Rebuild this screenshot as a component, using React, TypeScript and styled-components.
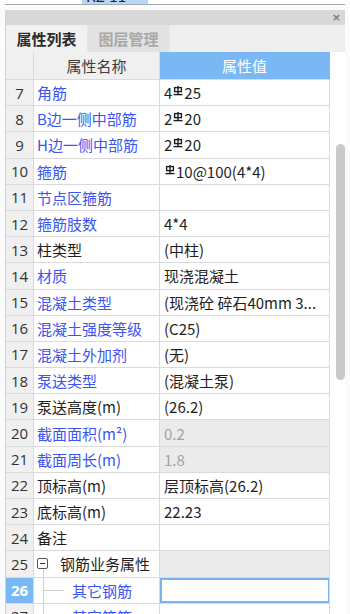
import React from "react";
import styled, { createGlobalStyle } from "styled-components";

const GlobalStyle = createGlobalStyle`
  html, body { margin: 0; padding: 0; }
  body {
    background: #fbfbfb;
    overflow: hidden;
    font-family: "Noto Sans CJK SC", "Noto Sans", sans-serif;
    -webkit-font-smoothing: antialiased;
  }
`;

const Page = styled.div`
  width: 350px;
  height: 614px;
  padding: 0 5px;
  box-sizing: border-box;
  overflow: hidden;
`;

const TopInput = styled.div`
  height: 4px;
  background: #fff;
  border-bottom: 1px solid #a8a8a8;
  display: flex;
  align-items: flex-end;
  overflow: hidden;
`;

const Highlight = styled.div`
  margin-left: 77px;
  width: 66px;
  height: 4px;
  flex: none;
  background: #b8d6f5;
  position: relative;
  overflow: hidden;
`;

const HighlightText = styled.span`
  position: absolute;
  left: 4px;
  bottom: -1px;
  font-size: 15px;
  line-height: 18px;
  color: #222;
`;

const Gap = styled.div`
  height: 5px;
`;

const Panel = styled.div`
  display: flex;
  flex-direction: column;
  border-left: 1px solid #d2d2d2;
  background: #fff;
`;

const TitleBar = styled.div`
  height: 15px;
  background: #d8d8d8;
  display: flex;
  align-items: center;
  justify-content: flex-end;
  padding-right: 4px;
`;

const CloseIcon = styled.span`
  font-family: "DejaVu Sans", sans-serif;
  font-size: 11px;
  line-height: 11px;
  font-weight: bold;
  color: #7d7d7d;
`;

const TabBar = styled.div`
  height: 27px;
  background: #efefef;
  display: flex;
`;

const Tab = styled.div<{ $active?: boolean }>`
  width: 81px;
  display: flex;
  align-items: center;
  justify-content: center;
  font-size: 15px;
  font-weight: bold;
  color: ${(p) => (p.$active ? "#2b2b2b" : "#a8a8a8")};
  background: ${(p) => (p.$active ? "#f1f1f1" : "#e2e2e2")};
  border-right: 1px solid #e6e6e6;
`;

const Body = styled.div`
  display: flex;
`;

const Table = styled.div`
  width: 324px;
  display: grid;
  grid-template-columns: 28px 126px 170px;
  grid-auto-rows: 26.2px;
  grid-template-rows: 28px;
`;

const Cell = styled.div`
  box-sizing: border-box;
  border-right: 1px solid #dadada;
  border-bottom: 1px solid #dadada;
  display: flex;
  align-items: center;
  font-size: 15px;
  white-space: nowrap;
  overflow: hidden;
  position: relative;
`;

const HeadCell = styled(Cell)<{ $blue?: boolean }>`
  justify-content: center;
  background: ${(p) => (p.$blue ? "#7ab8f5" : "#f0f0f0")};
  color: ${(p) => (p.$blue ? "#ffffff" : "#3c3c3c")};
  border-right-color: ${(p) => (p.$blue ? "#7ab8f5" : "#dadada")};
`;

const NumCell = styled(Cell)<{ $selected?: boolean }>`
  justify-content: center;
  background: ${(p) => (p.$selected ? "#7ab8f5" : "#f0f0f0")};
  color: ${(p) => (p.$selected ? "#ffffff" : "#333")};
  font-weight: ${(p) => (p.$selected ? "bold" : "normal")};
  font-family: "Open Sans", "Noto Sans", sans-serif;
  font-size: 15px;
`;

const NameCell = styled(Cell)<{ $blue?: boolean; $indent?: number }>`
  padding-left: ${(p) => p.$indent ?? 3}px;
  color: ${(p) => (p.$blue ? "#3a55f0" : "#1e1e1e")};
  background: #fff;
`;

const ValueCell = styled(Cell)<{ $gray?: boolean; $dim?: boolean }>`
  padding-left: 4px;
  background: ${(p) => (p.$gray ? "#ebebeb" : "#fff")};
  color: ${(p) => (p.$dim ? "#a3a3a3" : "#1e1e1e")};
`;

const EditBox = styled.div`
  position: absolute;
  left: 0;
  top: 0;
  right: -1px;
  bottom: 0;
  border: 2px solid #7ab2ea;
  background: #fff;
`;

const ScrollTrack = styled.div`
  width: 16px;
  background: #fff;
  position: relative;
`;

const ScrollThumb = styled.div`
  position: absolute;
  left: 6px;
  width: 9px;
  top: 92px;
  height: 236px;
  background: #c9c9c9;
  border-radius: 5px;
`;

const ExpandBox = styled.span`
  width: 11px;
  height: 11px;
  border: 1px solid #555;
  border-radius: 2px;
  box-sizing: border-box;
  display: inline-flex;
  align-items: center;
  justify-content: center;
  margin-right: 12px;
  background: #fff;
  position: relative;
  z-index: 1;
`;

const Minus = styled.span`
  width: 5px;
  height: 1px;
  background: #333;
`;

const TreeV = styled.span<{ $top: number }>`
  position: absolute;
  left: 9px;
  top: ${(p) => p.$top}px;
  bottom: -1px;
  width: 1px;
  background: #cfcfcf;
`;

const TreeH = styled.span`
  width: 20px;
  height: 1px;
  background: #cfcfcf;
  margin-left: 7px;
  margin-right: 8px;
  flex: none;
`;

const Rebar = () => (
  <svg
    width="10"
    height="11"
    viewBox="0 0 10 11"
    style={{ margin: "0 1px 0 1px", alignSelf: "flex-start", marginTop: "6px" }}
  >
    <rect x="1.6" y="1.6" width="6.8" height="4" fill="none" stroke="#1e1e1e" strokeWidth="1.4" />
    <line x1="5" y1="0" x2="5" y2="8.5" stroke="#1e1e1e" strokeWidth="1.4" />
    <line x1="0.5" y1="8.6" x2="9.5" y2="8.6" stroke="#1e1e1e" strokeWidth="1.4" />
  </svg>
);

type Row = {
  n: number;
  name: string;
  blue?: boolean;
  value?: React.ReactNode;
  gray?: boolean;
  dim?: boolean;
};

const rows: Row[] = [
  { n: 7, name: "角筋", blue: true, value: <>4<Rebar />25</> },
  { n: 8, name: "B边一侧中部筋", blue: true, value: <>2<Rebar />20</> },
  { n: 9, name: "H边一侧中部筋", blue: true, value: <>2<Rebar />20</> },
  { n: 10, name: "箍筋", blue: true, value: <><Rebar />10@100(4*4)</> },
  { n: 11, name: "节点区箍筋", blue: true, value: "" },
  { n: 12, name: "箍筋肢数", blue: true, value: "4*4" },
  { n: 13, name: "柱类型", value: "(中柱)" },
  { n: 14, name: "材质", blue: true, value: "现浇混凝土" },
  { n: 15, name: "混凝土类型", blue: true, value: "(现浇砼 碎石40mm 3..." },
  { n: 16, name: "混凝土强度等级", blue: true, value: "(C25)" },
  { n: 17, name: "混凝土外加剂", blue: true, value: "(无)" },
  { n: 18, name: "泵送类型", blue: true, value: "(混凝土泵)" },
  { n: 19, name: "泵送高度(m)", value: "(26.2)" },
  { n: 20, name: "截面面积(m²)", blue: true, value: "0.2", gray: true, dim: true },
  { n: 21, name: "截面周长(m)", blue: true, value: "1.8", gray: true, dim: true },
  { n: 22, name: "顶标高(m)", value: "层顶标高(26.2)" },
  { n: 23, name: "底标高(m)", value: "22.23" },
  { n: 24, name: "备注", value: "" },
];

export default function App() {
  return (
    <>
      <GlobalStyle />
      <Page>
        <TopInput>
          <Highlight>
            <HighlightText>KZ-11</HighlightText>
          </Highlight>
        </TopInput>
        <Gap />
        <Panel>
          <TitleBar>
            <CloseIcon>×</CloseIcon>
          </TitleBar>
          <TabBar>
            <Tab $active>属性列表</Tab>
            <Tab>图层管理</Tab>
          </TabBar>
          <Body>
            <Table>
              <HeadCell />
              <HeadCell>属性名称</HeadCell>
              <HeadCell $blue>属性值</HeadCell>
              {rows.map((r) => (
                <React.Fragment key={r.n}>
                  <NumCell>{r.n}</NumCell>
                  <NameCell $blue={r.blue}>{r.name}</NameCell>
                  <ValueCell $gray={r.gray} $dim={r.dim}>
                    {r.value}
                  </ValueCell>
                </React.Fragment>
              ))}
              <NumCell>25</NumCell>
              <NameCell $indent={3}>
                <TreeV $top={18} />
                <ExpandBox>
                  <Minus />
                </ExpandBox>
                钢筋业务属性
              </NameCell>
              <ValueCell $gray />
              <NumCell $selected>26</NumCell>
              <NameCell $blue $indent={3}>
                <TreeV $top={-1} />
                <TreeH />
                其它钢筋
              </NameCell>
              <ValueCell>
                <EditBox />
              </ValueCell>
              <NumCell>27</NumCell>
              <NameCell $blue $indent={3}>
                <TreeV $top={-1} />
                <TreeH />
                其它箍筋
              </NameCell>
              <ValueCell />
            </Table>
            <ScrollTrack>
              <ScrollThumb />
            </ScrollTrack>
          </Body>
        </Panel>
      </Page>
    </>
  );
}
